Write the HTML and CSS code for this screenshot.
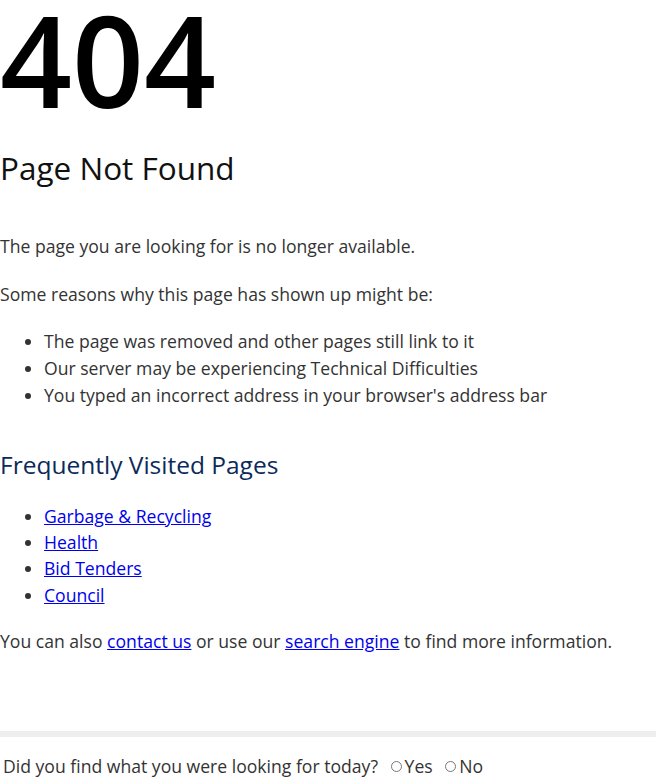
FILE: index.html
```html
<!DOCTYPE html>
<html lang="en">
<head>
  <meta charset="UTF-8" />
  <meta name="viewport" content="width=device-width, initial-scale=1.0"/>
  <title>Page Not Found</title>
  <link rel="stylesheet" href="styles.css">
</head>
<body>
  <div class="content">
    <h1 class="code">404</h1>
    <h2 class="title">Page Not Found</h2>

    <p>The page you are looking for is no longer available.</p>
    <p>Some reasons why this page has shown up might be:</p>
    <ul>
      <li>The page was removed and other pages still link to it</li>
      <li>Our server may be experiencing Technical Difficulties</li>
      <li>You typed an incorrect address in your browser's address bar</li>
    </ul>

    <h3 class="section">Frequently Visited Pages</h3>
    <ul class="links">
      <li><a href="#">Garbage &amp; Recycling</a></li>
      <li><a href="#">Health</a></li>
      <li><a href="#">Bid Tenders</a></li>
      <li><a href="#">Council</a></li>
    </ul>

    <p>You can also <a href="#">contact us</a> or use our <a href="#">search engine</a> to find more information.</p>
  </div>

  <div class="feedback">
    <span>Did you find what you were looking for today?</span>
    <label class="choice"><input type="radio" name="found">Yes</label>
    <label class="choice"><input type="radio" name="found">No</label>
  </div>
</body>
</html>
```

FILE: styles.css
```css
body {
  margin: 0;
  font-family: 'Open Sans', sans-serif;
  font-size: 17.6px;
  line-height: 26.7px;
  color: #333;
  background: #fff;
}

.content {
  padding-bottom: 55px;
  border-bottom: 6px solid #eee;
}

.code {
  margin: 0;
  font-size: 126px;
  line-height: 118px;
  font-weight: 600;
  color: #000;
}

.title {
  margin: 30px 0 45px;
  font-size: 31.5px;
  line-height: 40px;
  font-weight: 400;
  color: #111;
}

p {
  margin: 0 0 21px;
}

ul {
  margin: 0 0 40px;
  padding-left: 44px;
}

.section {
  margin: 0 0 22px;
  font-size: 24.5px;
  line-height: 32px;
  font-weight: 400;
  color: #0b2a5b;
}

.links {
  margin-bottom: 20px;
  line-height: 26.4px;
}

a {
  color: #0000ee;
}

.feedback {
  padding: 16px 0 0 3px;
  font-size: 17.6px;
  color: #333;
}

.choice {
  margin-left: 8px;
}

.choice input {
  margin: 0 3px 0 0;
  width: 11px;
  height: 11px;
  vertical-align: 1px;
}
```
